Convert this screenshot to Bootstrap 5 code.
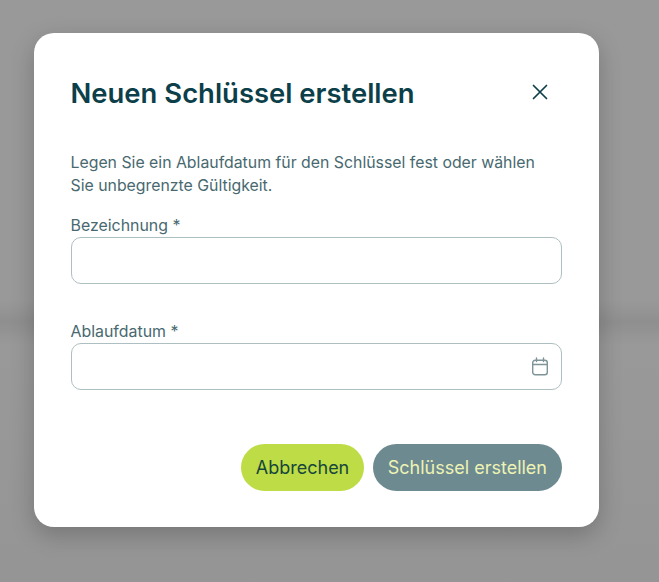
<!DOCTYPE html>
<html lang="de">
<head>
<meta charset="utf-8">
<title>Neuen Schlüssel erstellen</title>
<link href="https://cdn.jsdelivr.net/npm/bootstrap@5.3.0/dist/css/bootstrap.min.css" rel="stylesheet">
<style>
html,body{height:100%}
body{margin:0;overflow:hidden;font-family:Inter,"Liberation Sans",sans-serif;
 background:linear-gradient(180deg,#999 0,#999 300px,#8f8f8f 322px,#999 345px,#959595 582px)}
.stage{padding:33px 0 0 34px}
.dialog-box{width:565px;height:494px;background:#fff;border:0;border-radius:20px;padding:37px 37px 37px 36.5px;box-shadow:0 8px 24px rgba(0,0,0,.22)}
.dialog-head{height:44px;margin-bottom:37px}
.dialog-title{font-size:27.450px;font-weight:600;color:#0c3f49;line-height:44px;margin:0;padding-top:1px}
.close-x{background:none;border:0;padding:0;width:20px;height:20px;margin-right:12px;display:flex}
.intro{font-size:15.840px;line-height:23px;color:#48696f;margin:0 0 18px}
.fld-label{font-size:15.900px;line-height:22px;color:#48696f;margin:0;display:block}
.fld-input{height:47px;border:1px solid #aebfc1;border-radius:10px;background:#fff}
.fld-wrap{margin-bottom:37px}
.cal{position:absolute;right:13px;top:14px}
.pill{height:47px;border-radius:24px;border:0;font-size:18px;padding:0 15px;line-height:47px}
.pill-cancel{background:#bddc45;color:#16463c;padding:0 14.500px}
.pill-cancel:hover{background:#bddc45;color:#16463c}
.pill-go{background:#6c8a90;color:#eef3b4}
.pill-go:hover{background:#6c8a90;color:#eef3b4}
.btn-row{gap:9px}
.dialog-foot{margin-top:54px}
</style>
</head>
<body>
<div class="stage">
  <div class="dialog-box d-flex flex-column">
    <div class="dialog-head d-flex align-items-center justify-content-between">
      <h1 class="dialog-title">Neuen Schlüssel erstellen</h1>
      <button class="close-x" type="button" aria-label="Schließen">
        <svg width="20" height="20" viewBox="0 0 20 20" fill="none" stroke="#0c3f49" stroke-width="1.700" stroke-linecap="round"><path d="M3.500 3.500l13 13M16.500 3.500l-13 13"/></svg>
      </button>
    </div>
    <p class="intro">Legen Sie ein Ablaufdatum für den Schlüssel fest oder wählen Sie unbegrenzte Gültigkeit.</p>
    <div class="fld-wrap">
      <label class="fld-label" for="f1">Bezeichnung *</label>
      <input id="f1" type="text" class="form-control fld-input">
    </div>
    <div>
      <label class="fld-label" for="f2">Ablaufdatum *</label>
      <div class="position-relative">
        <input id="f2" type="text" class="form-control fld-input">
        <svg class="cal" width="18" height="19" viewBox="0 0 18 19" fill="none" stroke="#7f9498" stroke-width="1.400" stroke-linecap="round" stroke-linejoin="round"><rect x="1.700" y="3.200" width="14.600" height="14.600" rx="2.500"/><path d="M1.700 7.500h14.600M5.500 1v3.500M12.500 1v3.500"/></svg>
      </div>
    </div>
    <div class="dialog-foot d-flex justify-content-end btn-row">
      <button type="button" class="btn pill pill-cancel">Abbrechen</button>
      <button type="button" class="btn pill pill-go">Schlüssel erstellen</button>
    </div>
  </div>
</div>
<script src="https://cdn.jsdelivr.net/npm/bootstrap@5.3.0/dist/js/bootstrap.bundle.min.js"></script>
</body>
</html>
